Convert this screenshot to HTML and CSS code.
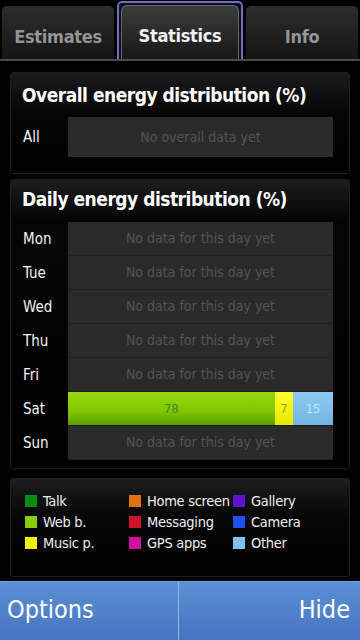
FILE: index.html
```html
<!DOCTYPE html>
<html lang="en">
<head>
    <meta charset="UTF-8">
    <meta name="viewport" content="width=device-width, initial-scale=1.0">
    <title>Statistics</title>
    <link rel="stylesheet" href="styles.css">
</head>
<body>
    <header class="tabs">
        <div class="tab">Estimates</div>
        <div class="tab active"><span>Statistics</span></div>
        <div class="tab">Info</div>
    </header>

    <main>
        <section class="panel overall">
            <h2>Overall energy distribution (%)</h2>
            <div class="row">
                <span class="day">All</span>
                <div class="bar empty">No overall data yet</div>
            </div>
        </section>

        <section class="panel daily">
            <h2>Daily energy distribution (%)</h2>
            <div class="rows">
                <div class="row"><span class="day">Mon</span><div class="bar empty">No data for this day yet</div></div>
                <div class="row"><span class="day">Tue</span><div class="bar empty">No data for this day yet</div></div>
                <div class="row"><span class="day">Wed</span><div class="bar empty">No data for this day yet</div></div>
                <div class="row"><span class="day">Thu</span><div class="bar empty">No data for this day yet</div></div>
                <div class="row"><span class="day">Fri</span><div class="bar empty">No data for this day yet</div></div>
                <div class="row">
                    <span class="day">Sat</span>
                    <div class="bar filled">
                        <div class="seg web" style="width: 78%">78</div>
                        <div class="seg music" style="width: 7%">7</div>
                        <div class="seg other" style="width: 15%">15</div>
                    </div>
                </div>
                <div class="row"><span class="day">Sun</span><div class="bar empty">No data for this day yet</div></div>
            </div>
        </section>

        <section class="panel legend">
            <div class="key"><i class="talk"></i>Talk</div>
            <div class="key"><i class="home"></i>Home screen</div>
            <div class="key"><i class="gallery"></i>Gallery</div>
            <div class="key"><i class="web"></i>Web b.</div>
            <div class="key"><i class="messaging"></i>Messaging</div>
            <div class="key"><i class="camera"></i>Camera</div>
            <div class="key"><i class="music"></i>Music p.</div>
            <div class="key"><i class="gps"></i>GPS apps</div>
            <div class="key"><i class="other"></i>Other</div>
        </section>
    </main>

    <footer class="softkeys">
        <button>Options</button>
        <button class="right">Hide</button>
    </footer>
</body>
</html>
```

FILE: styles.css
```css
body {
    margin: 0;
    width: 360px;
    height: 640px;
    background: #000;
    color: #fff;
    font-family: "DejaVu Sans Condensed", "DejaVu Sans", sans-serif;
    font-stretch: condensed;
    display: flex;
    flex-direction: column;
    overflow: hidden;
}

/* tab bar */
.tabs {
    display: flex;
    height: 63px;
    padding: 0 2px;
    box-sizing: border-box;
    border-bottom: 2px solid #4a4a4a;
    align-items: flex-end;
}

.tab {
    flex: 1;
    height: 53px;
    display: flex;
    align-items: center;
    justify-content: center;
    padding-top: 8px;
    box-sizing: border-box;
    font-size: 18px;
    font-weight: bold;
    letter-spacing: -0.3px;
    color: #959595;
    background: linear-gradient(#2e2e2e, #141414);
    border-radius: 5px 5px 0 0;
}

.tab.active {
    height: 58px;
    padding: 2px 2px 0 2px;
    background: #0c0c2a;
    border: 2px solid #7070b4;
    border-bottom: none;
    border-radius: 5px 5px 0 0;
    margin: 0 3px;
    flex: 0 0 126px;
}

.tab.active span {
    flex: 1;
    align-self: stretch;
    display: flex;
    align-items: center;
    justify-content: center;
    padding-top: 6px;
    color: #f2f2f2;
    border: 1px solid #6a6a6a;
    border-bottom: none;
    border-radius: 6px 6px 0 0;
    background: linear-gradient(#3c3e3c, #161616);
}

main {
    flex: 1;
    padding: 11px 10px 0 10px;
}

.panel {
    background: linear-gradient(#1c1c1c, #050505 40px, #000);
    border: 1px solid #1e1e1e;
    border-radius: 3px;
    padding: 8px 16px 0 12px;
    margin-bottom: 4px;
}

.panel h2 {
    margin: 0 0 0 -1px;
    font-size: 19px;
    font-weight: bold;
    letter-spacing: -0.5px;
    line-height: 28px;
    white-space: nowrap;
    color: #fff;
}

.overall {
    height: 92px;
    margin-bottom: 5px;
}

.overall .row {
    margin-top: 8px;
}

.daily {
    height: 283px;
    padding-top: 5px;
}

.daily h2 {
    margin-bottom: 9px;
}

.row {
    display: flex;
    align-items: center;
}

.day {
    width: 45px;
    font-size: 15px;
    color: #f4f4f4;
}

.bar {
    flex: 1;
    height: 40px;
    display: flex;
    align-items: center;
    justify-content: center;
    font-size: 14px;
}

.rows .bar {
    height: 33px;
    border-bottom: 1px solid #202020;
}

.bar.empty {
    background: #2a2a2a;
    color: #545454;
}

.bar.filled {
    justify-content: flex-start;
    border-bottom: 1px solid #1a1a1a;
}

.seg {
    height: 100%;
    display: flex;
    align-items: center;
    justify-content: center;
    font-size: 13px;
}

.seg.web {
    background: linear-gradient(#98d810, #7ec600 60%, #5a9e00);
    color: #3e8c1e;
}

.seg.music {
    background: linear-gradient(#ffff30, #e8e800);
    color: #a0a000;
}

.seg.other {
    background: linear-gradient(#8ccaf0, #74b4de);
    color: #c0e4fa;
}

/* legend */
.legend {
    margin-top: 9px;
    height: 85px;
    padding: 12px 0 0 14px;
    display: grid;
    grid-template-columns: 104px 104px 1fr;
    grid-auto-rows: 21px;
}

.key {
    display: flex;
    align-items: center;
    font-size: 14.5px;
    letter-spacing: -0.3px;
    white-space: nowrap;
    color: #f0f0f0;
}

.key i {
    width: 12px;
    height: 12px;
    margin-right: 6px;
    flex-shrink: 0;
}

.talk { background: #0a8a10; }
.home { background: #e07010; }
.gallery { background: #6010d0; }
.web { background: #88cc10; }
.messaging { background: #d0102c; }
.camera { background: #2050f0; }
.music { background: #f0f010; }
.gps { background: #d010a0; }
.other { background: #80c0f0; }

/* soft keys */
.softkeys {
    height: 60px;
    display: flex;
    background: linear-gradient(#5a90d4, #4874c0);
    border-top: 1px solid #6aa0e0;
}

.softkeys button {
    flex: 1;
    border: none;
    background: none;
    color: #fff;
    font-family: inherit;
    font-stretch: condensed;
    font-size: 25px;
    text-align: left;
    padding: 0 0 2px 7px;
}

.softkeys button.right {
    text-align: right;
    padding: 0 10px 2px 0;
    border-left: 1px solid #8ab8ec;
}
```
